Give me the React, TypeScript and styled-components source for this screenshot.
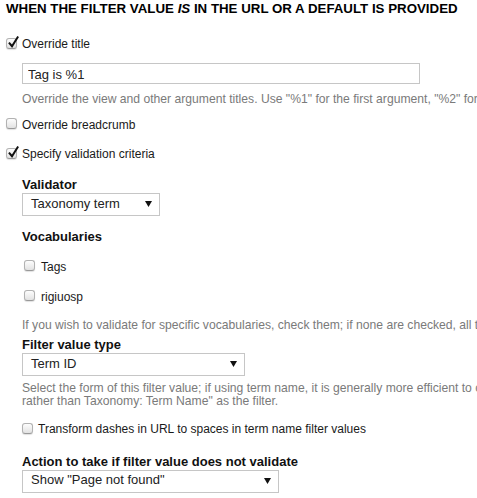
import { createGlobalStyle, styled } from "styled-components";

const GlobalStyle = createGlobalStyle`
  html, body {
    margin: 0;
    padding: 0;
    overflow: hidden;
    background: #fff;
  }
  body {
    font-family: "Liberation Sans", Arial, sans-serif;
    color: #222;
  }
`;

const Page = styled.div`
  width: 751px;
  padding: 1px 0 0 6px;
  display: flex;
  flex-direction: column;
`;

const Heading = styled.h2`
  margin: 0;
  font-size: 13.3px;
  line-height: 16px;
  font-weight: bold;
  text-transform: uppercase;
  color: #000;
  white-space: nowrap;
`;

const Nested = styled.div`
  display: flex;
  flex-direction: column;
  padding-left: 16px;
`;

const CheckRow = styled.label<{ $mt: number; $indent?: number }>`
  display: flex;
  align-items: flex-start;
  gap: ${(p) => (p.$indent ? 6 : 5)}px;
  margin-top: ${(p) => p.$mt}px;
  margin-left: ${(p) => p.$indent ?? 0}px;
  height: 16px;
  font-size: 12px;
  line-height: 16px;
  color: #1a1a1a;
  white-space: nowrap;
`;

const Box = styled.span`
  position: relative;
  flex: none;
  width: 11px;
  height: 11px;
  margin-top: 1.5px;
  box-sizing: border-box;
  border: 1px solid #b2b2b2;
  border-bottom-color: #999;
  border-radius: 3px;
  background: linear-gradient(#fdfdfd, #e2e2e2);
  box-shadow: 0 1px 1px rgba(0, 0, 0, 0.12);
`;

const Tick = styled.svg`
  position: absolute;
  left: 0px;
  top: -3px;
  width: 12px;
  height: 13px;
`;

const TextInput = styled.input<{ $mt: number }>`
  width: 398px;
  height: 21px;
  margin: ${(p) => p.$mt}px 0 0;
  padding: 2px 5px 0;
  box-sizing: border-box;
  border: 1px solid #c6c6c6;
  font-family: "Liberation Sans", Arial, sans-serif;
  font-size: 13px;
  color: #222;
  outline: none;
`;

const Desc = styled.div<{ $mt: number }>`
  margin-top: ${(p) => p.$mt}px;
  font-size: 12.15px;
  line-height: 13.5px;
  color: #7a7a7a;
`;

const FieldLabel = styled.div<{ $mt: number }>`
  margin-top: ${(p) => p.$mt}px;
  font-size: 13px;
  line-height: 17px;
  font-weight: bold;
  color: #111;
  white-space: nowrap;
`;

const Select = styled.div<{ $width: number }>`
  display: flex;
  align-items: center;
  justify-content: space-between;
  width: ${(p) => p.$width}px;
  height: 23.5px;
  padding: 0 7px 3px 8px;
  box-sizing: border-box;
  border: 1px solid #c6c6c6;
  background: #fff;
  font-size: 13px;
  color: #222;
  white-space: nowrap;
`;

const Arrow = styled.svg`
  width: 7px;
  height: 6px;
  flex: none;
  margin-top: 2px;
`;

const Check = ({
  label,
  checked,
  mt,
  indent,
}: {
  label: string;
  checked?: boolean;
  mt: number;
  indent?: number;
}) => (
  <CheckRow $mt={mt} $indent={indent}>
    <Box>
      {checked && (
        <Tick viewBox="0 0 12 13">
          <path
            d="M2.6 7.4 L5 10.2 L10.6 1.4"
            fill="none"
            stroke="#111"
            strokeWidth="2"
            strokeLinecap="square"
          />
        </Tick>
      )}
    </Box>
    <span>{label}</span>
  </CheckRow>
);

const Dropdown = ({ value, width }: { value: string; width: number }) => (
  <Select $width={width}>
    <span>{value}</span>
    <Arrow viewBox="0 0 7 6">
      <path d="M0 0 H7 L3.5 6 Z" fill="#111" />
    </Arrow>
  </Select>
);

const App = () => {
  return (
    <>
      <GlobalStyle />
      <Page>
        <Heading>
          When the filter value <i>is</i> in the URL or a default is provided
        </Heading>

        <Check label="Override title" checked mt={19} />
        <Nested>
          <TextInput $mt={11.3} defaultValue="Tag is %1" readOnly />
          <Desc $mt={9}>
            Override the view and other argument titles. Use "%1" for the first
            argument, "%2" for the second, etc.
          </Desc>
        </Nested>

        <Check label="Override breadcrumb" mt={10} />
        <Check label="Specify validation criteria" checked mt={13.5} />

        <Nested>
          <FieldLabel $mt={13.5}>Validator</FieldLabel>
          <Dropdown value="Taxonomy term" width={138} />

          <FieldLabel $mt={12}>Vocabularies</FieldLabel>
          <Check label="Tags" mt={13.7} indent={2} />
          <Check label="rigiuosp" mt={14} indent={2} />
          <Desc $mt={14.5}>
            If you wish to validate for specific vocabularies, check them; if
            none are checked, all terms will pass.
          </Desc>

          <FieldLabel $mt={3}>Filter value type</FieldLabel>
          <Dropdown value="Term ID" width={223} />
          <Desc $mt={5.3}>
            Select the form of this filter value; if using term name, it is
            generally more efficient to convert it to a term ID and use
            Taxonomy: Term ID rather than Taxonomy: Term Name" as the filter.
          </Desc>

          <Check
            label="Transform dashes in URL to spaces in term name filter values"
            mt={12.4}
            indent={0}
          />

          <FieldLabel $mt={15.5}>
            Action to take if filter value does not validate
          </FieldLabel>
          <Dropdown value={'Show "Page not found"'} width={257} />
        </Nested>
      </Page>
    </>
  );
};

export default App;
